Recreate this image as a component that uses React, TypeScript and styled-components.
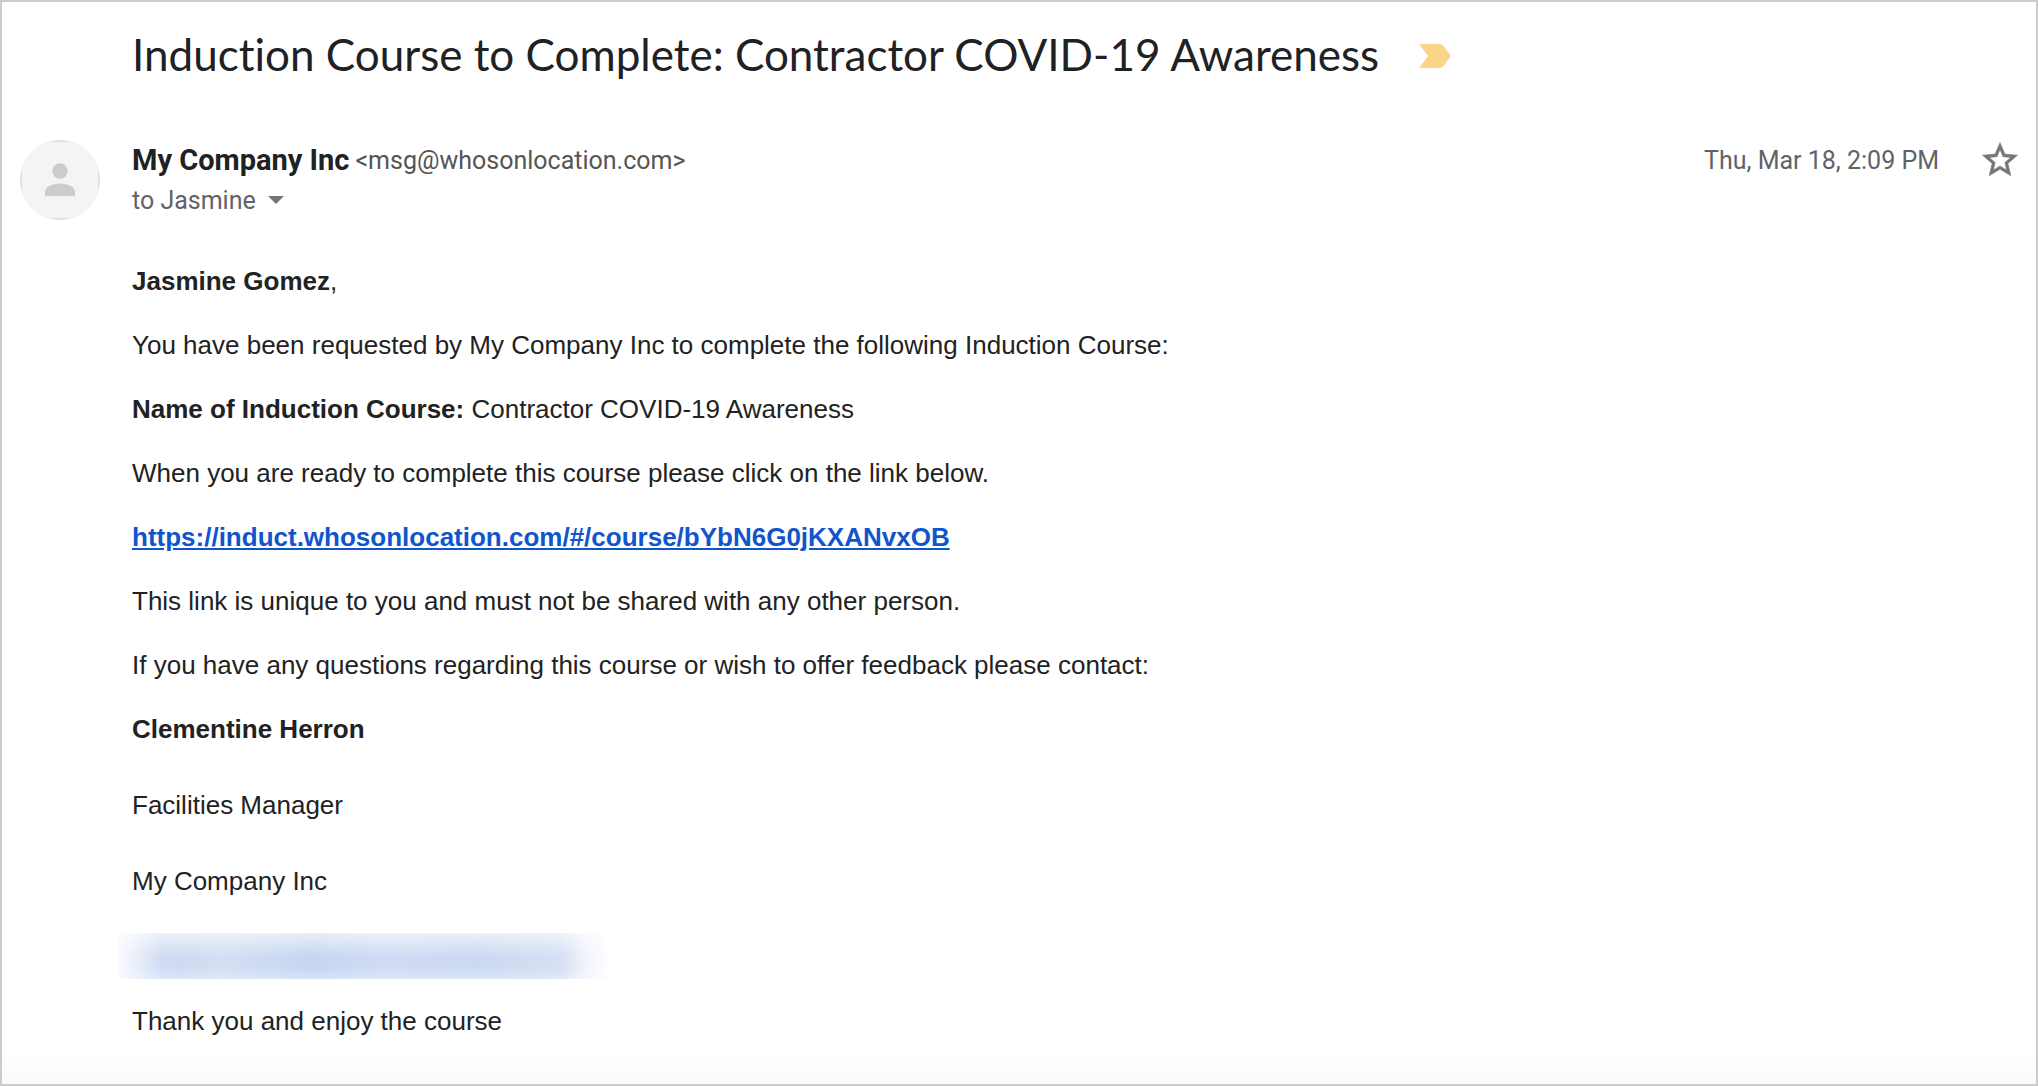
import React from "react";
import styled, { createGlobalStyle } from "styled-components";

const Global = createGlobalStyle`
  * { box-sizing: border-box; }
  body { margin: 0; background: #fff; }
`;

const Page = styled.main`
  min-height: 100vh;
  border: 2px solid #cccccc;
  padding: 24px 15px 44px 18px;
  display: grid;
  grid-template-columns: 80px minmax(0, 1fr);
  column-gap: 32px;
  align-content: start;
  color: #202124;
  background: linear-gradient(to top, #fafafa, #ffffff 32px);
  font-family: "Liberation Sans", Arial, sans-serif;
`;

const Subject = styled.header`
  grid-column: 2;
  display: flex;
  align-items: center;
  gap: 40px;
  margin-bottom: 58px;
`;

const Title = styled.h1`
  margin: 0;
  font: 400 44px/56px Lato, sans-serif;
  font-variant-ligatures: none;
  color: #202124;
`;

const IconButton = styled.button`
  display: flex;
  flex: none;
  padding: 0;
  border: 0;
  background: none;
  cursor: pointer;
`;

const Avatar = styled.div`
  width: 80px;
  height: 80px;
  border: 2px solid #e0e0e0;
  background: #f4f4f4;
  clip-path: circle(50%);
  display: grid;
  place-items: center;
`;

const Sender = styled.div`
  display: flex;
  justify-content: space-between;
  align-items: flex-start;
  font-family: Roboto, sans-serif;
`;

const Line = styled.div`
  display: flex;
  align-items: center;
  gap: 6px;
  height: 40px;
  font-size: 25px;
  color: #5f6368;
`;

const Recipient = styled(Line)`
  gap: 12px;
`;

const Address = styled.span`
  color: #555555;
`;

const Name = styled.strong`
  font-size: 29px;
  font-weight: 700;
  color: #202124;
`;

const Meta = styled(Line)`
  gap: 40px;
`;

const Body = styled.article`
  grid-column: 2;
  padding-top: 45px;
  font-size: 26px;
  line-height: 32px;
  color: #222222;
`;

const Para = styled.p`
  margin: 0 0 32px;
`;

const Detail = styled.p`
  margin: 0 0 44px;
`;

const Link = styled.a`
  color: #1155cc;
  font-weight: 700;
`;

const Redacted = styled.div`
  max-width: 488px;
  height: 46px;
  margin: -8px 0 26px -14px;
  background:
    linear-gradient(to right, #ffffffd9, #ffffff80 4%, #ffffff00 9%, #ffffff00 91%, #ffffffa6 96%, #ffffffe6),
    linear-gradient(to bottom, #ffffff99, #ffffff00 50%, #ffffff00 75%, #ffffff4d),
    linear-gradient(to right, #d2def3 0%, #cedbf3 13%, #d4dff2 21%, #c6d6f2 40%, #d0dcf4 55%, #ccd9f2 74%, #d5e0f3 90%, #dbe4f6 100%);
`;

export default function App() {
  return (
    <Page>
      <Global />
      <Subject>
        <Title>Induction Course to Complete: Contractor COVID-19 Awareness</Title>
        <IconButton aria-label="Important">
          <svg width="32" height="28" viewBox="0 0 32 28" fill="#fad489">
            <path d="M0 4h20q3 0 4.500 2L32 16l-7.500 10q-1.500 2-4.500 2H0l9-12z" />
          </svg>
        </IconButton>
      </Subject>
      <Avatar>
        <svg width="30" height="34" viewBox="0 0 30 34" fill="#cccccc">
          <circle cx="15" cy="8" r="7.700" />
          <path d="M0 33v-4c0-5 7-8.500 15-8.500S30 24 30 29v4z" />
        </svg>
      </Avatar>
      <Sender>
        <div>
          <Line>
            <Name>My Company Inc</Name>
            <Address>&lt;msg@whosonlocation.com&gt;</Address>
          </Line>
          <Recipient>
            to Jasmine
            <IconButton aria-label="Show details">
              <svg width="16" height="8" viewBox="0 0 16 8" fill="#757575">
                <path d="M0 0h16L8 8z" />
              </svg>
            </IconButton>
          </Recipient>
        </div>
        <Meta>
          <time>Thu, Mar 18, 2:09 PM</time>
          <IconButton aria-label="Star">
            <svg width="42" height="42" viewBox="0 0 24 24" fill="#777777" stroke="#777777" strokeWidth="0.3">
              <path d="M22 9.240l-7.190-.62L12 2 9.190 8.630 2 9.240l5.460 4.730L5.820 21 12 17.270 18.180 21l-1.630-7.030L22 9.240zM12 15.400l-3.760 2.270 1-4.280-3.320-2.880 4.380-.38L12 6.100l1.710 4.040 4.380.38-3.320 2.880 1 4.280L12 15.400z" />
            </svg>
          </IconButton>
        </Meta>
      </Sender>
      <Body>
        <Para><b>Jasmine Gomez</b>,</Para>
        <Para>You have been requested by My Company Inc to complete the following Induction Course:</Para>
        <Para><b>Name of Induction Course:</b> Contractor COVID-19 Awareness</Para>
        <Para>When you are ready to complete this course please click on the link below.</Para>
        <Para><Link href="#/course/bYbN6G0jKXANvxOB">https://induct.whosonlocation.com/#/course/bYbN6G0jKXANvxOB</Link></Para>
        <Para>This link is unique to you and must not be shared with any other person.</Para>
        <Para>If you have any questions regarding this course or wish to offer feedback please contact:</Para>
        <Detail><b>Clementine Herron</b></Detail>
        <Detail>Facilities Manager</Detail>
        <Detail>My Company Inc</Detail>
        <Redacted />
        <div>Thank you and enjoy the course</div>
      </Body>
    </Page>
  );
}
